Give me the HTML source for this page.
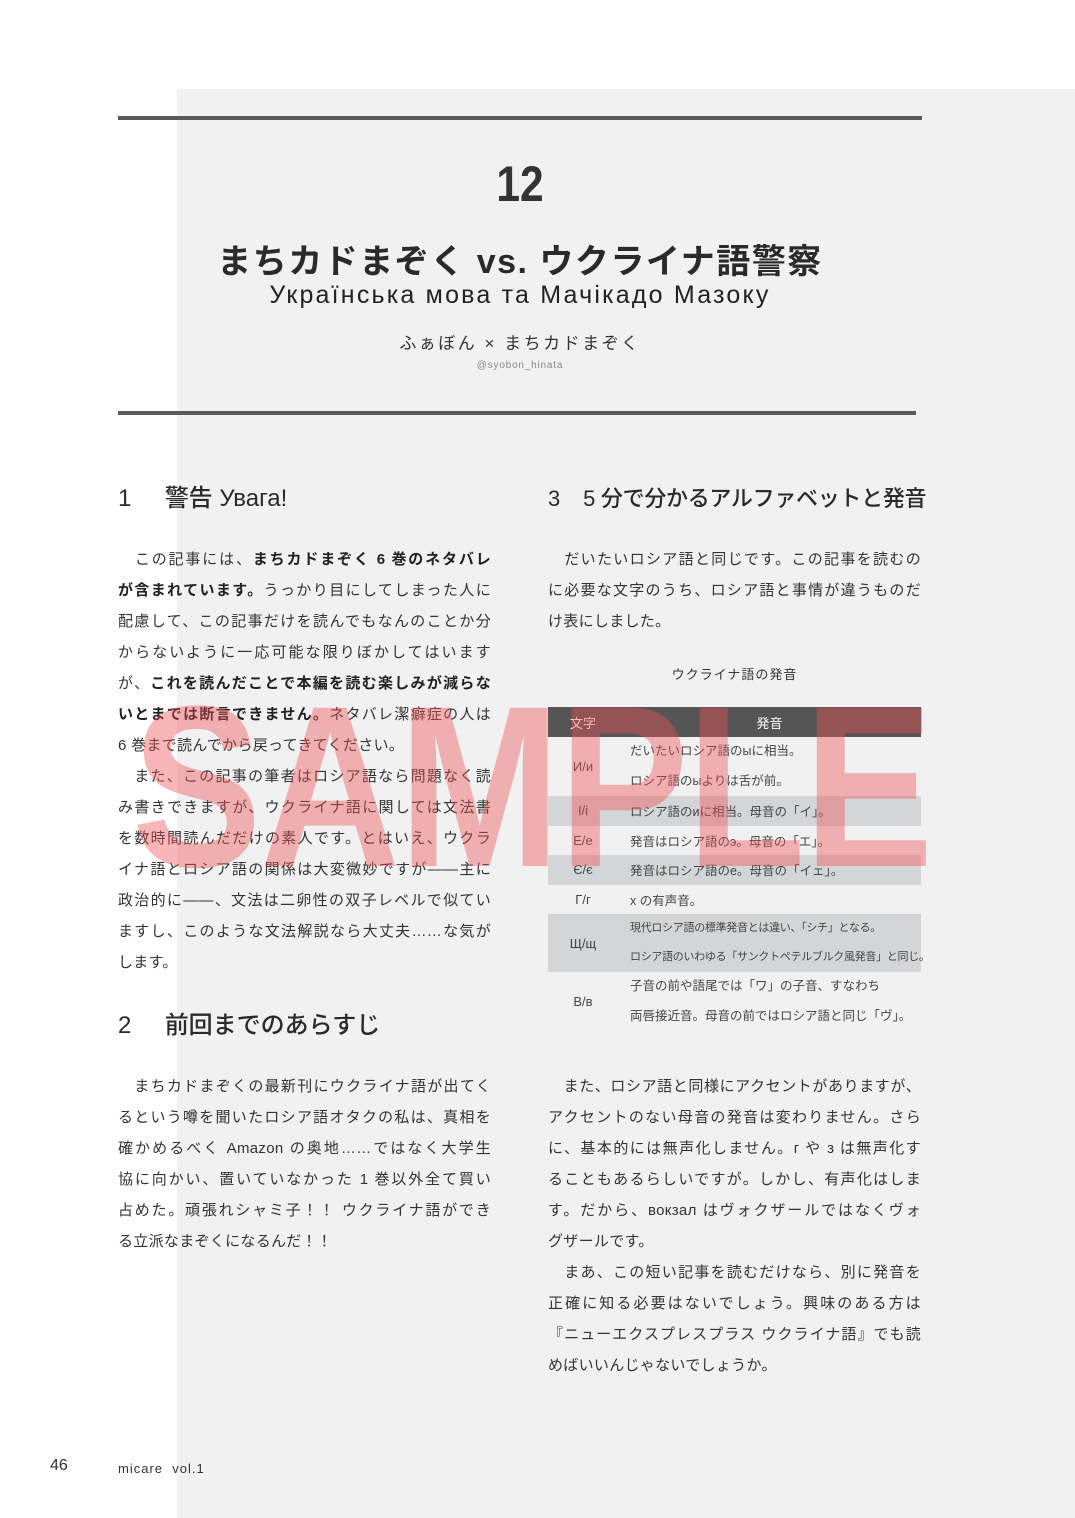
<!DOCTYPE html>
<html><head><meta charset="utf-8"><style>
*{margin:0;padding:0;box-sizing:border-box}
body{width:1075px;height:1518px;position:relative;background:#fff;font-family:"Liberation Sans","Noto Sans CJK JP",sans-serif;color:#333;overflow:hidden}
.bg{position:absolute;left:177px;top:89px;right:0;bottom:0;background:#f0f1f0}
.rule{position:absolute;height:4px;background:#5a5a5a}
.abs{position:absolute}
.col{position:absolute;width:373px;font-size:15px;line-height:31px;letter-spacing:0.3px;color:#333}
.col div{white-space:nowrap;text-align:justify;text-align-last:justify;height:31px}
.col div.l{text-align-last:left}
b{font-weight:bold;color:#222}
h2{position:absolute;font-size:24px;font-weight:500;color:#2a2a2a;white-space:nowrap;line-height:30px}
table{position:absolute;left:548px;top:707px;width:373px;border-collapse:collapse;font-size:12.5px;color:#444;table-layout:fixed}
td,th{padding:0;height:29.5px;white-space:nowrap;overflow:visible}
th{background:#555;color:#fff;font-weight:normal;font-size:13px}
td.c{text-align:center;font-size:13px}
td.t{padding-left:12px}
tr.g td{background:#d4d5d6}
.wm{position:absolute;left:132px;top:672px;font-size:230px;line-height:230px;font-weight:bold;color:rgba(238,80,86,0.42);font-family:"Liberation Sans",sans-serif;transform:scaleX(0.845);transform-origin:left top;letter-spacing:-2px;white-space:nowrap}
</style></head><body>
<div class="bg"></div>
<div class="rule" style="left:118px;top:116px;width:804px"></div>
<div class="rule" style="left:118px;top:411px;width:798px"></div>
<div class="abs" style="left:0;width:1040px;top:155px;text-align:center;font-size:50px;font-weight:bold;color:#333;transform:scaleX(0.85)">12</div>
<div class="abs" style="left:118px;width:804px;top:234px;text-align:center;font-size:34px;font-weight:bold;color:#2a2a2a;letter-spacing:1.5px;white-space:nowrap">まちカドまぞく vs. ウクライナ語警察</div>
<div class="abs" style="left:118px;width:804px;top:281px;text-align:center;font-size:25px;color:#222;letter-spacing:2.2px;white-space:nowrap">Українська мова та Мачікадо Мазоку</div>
<div class="abs" style="left:118px;width:804px;top:329px;text-align:center;font-size:17px;color:#333;letter-spacing:2.5px">ふぁぼん × まちカドまぞく</div>
<div class="abs" style="left:118px;width:804px;top:360px;text-align:center;font-size:10px;color:#888;letter-spacing:0.8px">@syobon_hinata</div>

<h2 style="left:118px;top:484px">1&nbsp;&nbsp;&nbsp;&nbsp;&nbsp;警告 Увага!</h2>
<div class="col" style="left:118px;top:544px">
<div>　この記事には、<b>まちカドまぞく 6 巻のネタバレ</b></div>
<div><b>が含まれています。</b>うっかり目にしてしまった人に</div>
<div>配慮して、この記事だけを読んでもなんのことか分</div>
<div>からないように一応可能な限りぼかしてはいます</div>
<div>が、<b>これを読んだことで本編を読む楽しみが減らな</b></div>
<div><b>いとまでは断言できません。</b>ネタバレ潔癖症の人は</div>
<div class="l">6 巻まで読んでから戻ってきてください。</div>
<div>　また、この記事の筆者はロシア語なら問題なく読</div>
<div>み書きできますが、ウクライナ語に関しては文法書</div>
<div>を数時間読んだだけの素人です。とはいえ、ウクラ</div>
<div>イナ語とロシア語の関係は大変微妙ですが――主に</div>
<div>政治的に――、文法は二卵性の双子レベルで似てい</div>
<div>ますし、このような文法解説なら大丈夫……な気が</div>
<div class="l">します。</div>
</div>

<h2 style="left:118px;top:1011px">2&nbsp;&nbsp;&nbsp;&nbsp;&nbsp;前回までのあらすじ</h2>
<div class="col" style="left:118px;top:1071px">
<div>　まちカドまぞくの最新刊にウクライナ語が出てく</div>
<div>るという噂を聞いたロシア語オタクの私は、真相を</div>
<div>確かめるべく Amazon の奥地……ではなく大学生</div>
<div>協に向かい、置いていなかった 1 巻以外全て買い</div>
<div>占めた。頑張れシャミ子！！ ウクライナ語ができ</div>
<div class="l">る立派なまぞくになるんだ！！</div>
</div>

<h2 style="left:548px;top:484px;font-size:22px;letter-spacing:-0.3px">3&nbsp;&nbsp;&nbsp;&nbsp;5 分で分かるアルファベットと発音</h2>
<div class="col" style="left:548px;top:544px">
<div>　だいたいロシア語と同じです。この記事を読むの</div>
<div>に必要な文字のうち、ロシア語と事情が違うものだ</div>
<div class="l">け表にしました。</div>
</div>
<div class="abs" style="left:548px;width:373px;top:664px;text-align:center;font-size:13px;color:#333;letter-spacing:1px">ウクライナ語の発音</div>

<table>
<colgroup><col style="width:70px"><col style="width:303px"></colgroup>
<tr><th style="height:30px">文字</th><th>発音</th></tr>
<tr><td class="c" style="height:59px">И/и</td><td class="t" style="line-height:29.5px">だいたいロシア語のыに相当。<br>ロシア語のыよりは舌が前。</td></tr>
<tr class="g"><td class="c">І/і</td><td class="t">ロシア語のиに相当。母音の「イ」。</td></tr>
<tr><td class="c">Е/е</td><td class="t">発音はロシア語のэ。母音の「エ」。</td></tr>
<tr class="g"><td class="c">Є/є</td><td class="t">発音はロシア語のe。母音の「イェ」。</td></tr>
<tr><td class="c">Г/г</td><td class="t">х の有声音。</td></tr>
<tr class="g"><td class="c" style="height:58px">Щ/щ</td><td class="t" style="font-size:11px;line-height:29px;letter-spacing:-0.3px">現代ロシア語の標準発音とは違い、「シチ」となる。<br>ロシア語のいわゆる「サンクトペテルブルク風発音」と同じ。</td></tr>
<tr><td class="c" style="height:59px">В/в</td><td class="t" style="line-height:29.5px">子音の前や語尾では「ワ」の子音、すなわち<br>両唇接近音。母音の前ではロシア語と同じ「ヴ」。</td></tr>
</table>

<div class="col" style="left:548px;top:1071px">
<div>　また、ロシア語と同様にアクセントがありますが、</div>
<div>アクセントのない母音の発音は変わりません。さら</div>
<div>に、基本的には無声化しません。г や з は無声化す</div>
<div>ることもあるらしいですが。しかし、有声化はしま</div>
<div>す。だから、вокзал はヴォクザールではなくヴォ</div>
<div class="l">グザールです。</div>
<div>　まあ、この短い記事を読むだけなら、別に発音を</div>
<div>正確に知る必要はないでしょう。興味のある方は</div>
<div>『ニューエクスプレスプラス ウクライナ語』でも読</div>
<div class="l">めばいいんじゃないでしょうか。</div>
</div>

<div class="abs" style="left:50px;top:1457px;font-size:16px;color:#333">46</div>
<div class="abs" style="left:118px;top:1461px;font-size:13px;color:#333;letter-spacing:1px">micare&nbsp; vol.1</div>

<div class="wm">SAMPLE</div>
</body></html>
